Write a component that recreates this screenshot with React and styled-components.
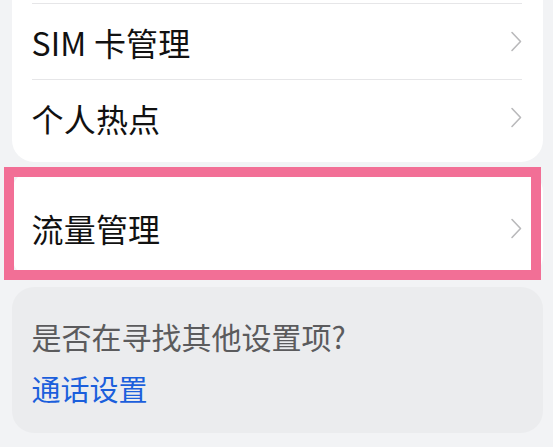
import React from 'react';
import styled, { createGlobalStyle } from 'styled-components';

const GlobalStyle = createGlobalStyle`
  html, body {
    margin: 0;
    padding: 0;
    background: #f2f3f5;
    font-family: "Noto Sans CJK SC", "Noto Sans", sans-serif;
  }
`;

// Page is scrolled: the top card starts above the viewport
const Page = styled.div`
  width: 553px;
  height: 447px;
  overflow: hidden;
  box-sizing: border-box;
  padding: 0 10px 0 11.5px;
  display: flex;
  flex-direction: column;
`;

const Card = styled.div`
  background: #ffffff;
  border-radius: 22px;
  margin-top: ${(p) => p.$top || 0}px;
  padding: ${(p) => p.$padTop || 0}px 21px ${(p) => p.$padBottom || 0}px 20px;
  position: relative;
`;

const Row = styled.div`
  display: flex;
  align-items: center;
  justify-content: space-between;
  height: ${(p) => p.$height || 76}px;
  box-sizing: border-box;
  padding-top: ${(p) => p.$offset || 0}px;
  border-top: ${(p) => (p.$divider ? '1px solid #e6e6e8' : 'none')};
`;

const Label = styled.span`
  font-size: 32px;
  line-height: 40px;
  color: #111111;
  letter-spacing: 0.2px;
`;

const Chevron = () => (
  <svg width="12" height="21" viewBox="0 0 12 21" fill="none">
    <path d="M2 1.5 L10.5 10.5 L2 19.5" stroke="#b9b9bb" strokeWidth="1.6" strokeLinecap="round" strokeLinejoin="round" />
  </svg>
);

const Highlight = styled.div`
  position: absolute;
  left: -8px;
  right: 2px;
  top: -3px;
  bottom: -2px;
  border: 10px solid #f26f96;
  pointer-events: none;
`;

const HintCard = styled.div`
  background: #ebecee;
  border-radius: 22px;
  margin-top: 9px;
  height: 146px;
  box-sizing: border-box;
  padding: 30px 20px 0 20px;
  display: flex;
  flex-direction: column;
  gap: 14px;
`;

const HintText = styled.span`
  font-size: 30px;
  line-height: 38px;
  color: #5b5b5d;
`;

const LinkText = styled.span`
  font-size: 29px;
  line-height: 38px;
  color: #1b5fdc;
`;

const App = () => {
  return (
    <>
      <GlobalStyle />
      <Page>
        <Card $top={-30} $padTop={33} $padBottom={7}>
          <Row $divider $height={76}>
            <Label>SIM 卡管理</Label>
            <Chevron />
          </Row>
          <Row $divider $height={76}>
            <Label>个人热点</Label>
            <Chevron />
          </Row>
        </Card>
        <Card $top={8}>
          <Row $height={108} $offset={8}>
            <Label>流量管理</Label>
            <Chevron />
          </Row>
          <Highlight />
        </Card>
        <HintCard>
          <HintText>是否在寻找其他设置项?</HintText>
          <LinkText>通话设置</LinkText>
        </HintCard>
      </Page>
    </>
  );
};

export default App;
